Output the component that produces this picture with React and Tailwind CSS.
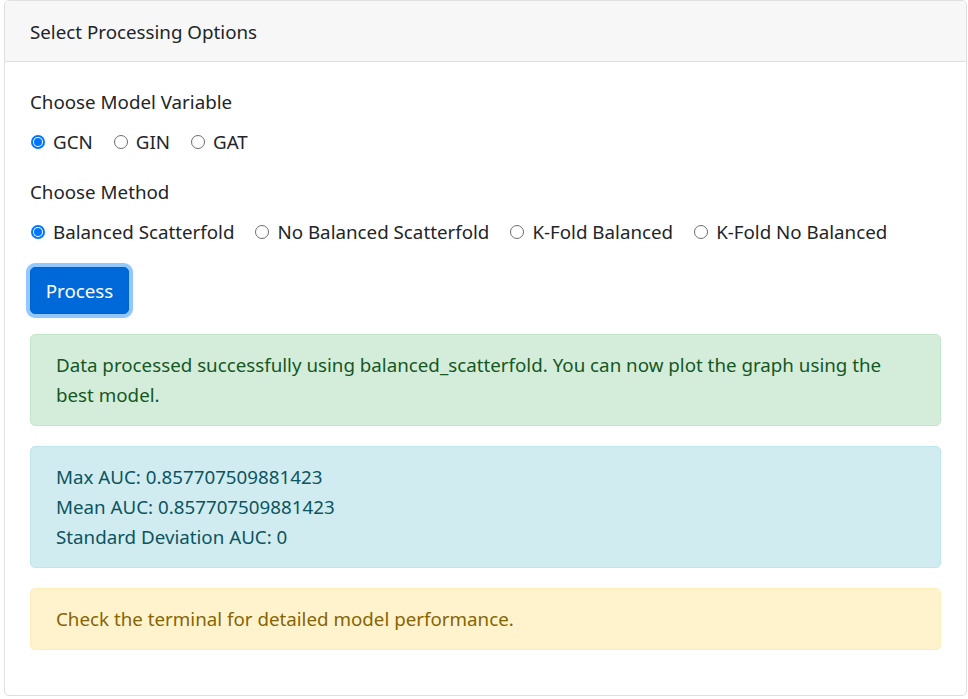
import React, { useState } from 'react';

const Radio = ({ checked, label, onChange, last }) => (
  <label className={`inline-flex items-center cursor-pointer ${last ? '' : 'mr-[20px]'}`} onClick={onChange}>
    {checked ? (
      <span className="ml-[1px] w-[14px] h-[14px] rounded-full bg-[#0075ff] flex items-center justify-center">
        <span className="w-[10px] h-[10px] rounded-full bg-white flex items-center justify-center">
          <span className="w-[8px] h-[8px] rounded-full bg-[#0075ff]" />
        </span>
      </span>
    ) : (
      <span className="ml-[1px] w-[14px] h-[14px] rounded-full border border-[#6d6d6d] bg-white" />
    )}
    <span className="ml-[8px]">{label}</span>
  </label>
);

const App = () => {
  const [model, setModel] = useState('GCN');
  const [method, setMethod] = useState('balanced_scatterfold');

  const models = ['GCN', 'GIN', 'GAT'];
  const methods = [
    { value: 'balanced_scatterfold', label: 'Balanced Scatterfold' },
    { value: 'no_balanced_scatterfold', label: 'No Balanced Scatterfold' },
    { value: 'kfold_balanced', label: 'K-Fold Balanced' },
    { value: 'kfold_no_balanced', label: 'K-Fold No Balanced' },
  ];

  const successMsg = `Data processed successfully using ${method}. You can now plot the graph using the best model.`;

  return (
    <div className="bg-white min-h-[699px] pl-[4px] pt-0 text-[#212529] text-[18.75px] leading-[30px] font-['Noto_Sans',sans-serif]">
      <div className="w-[963px] border border-[#dfdfdf] rounded-[5px] bg-white">
        <div className="bg-[#f7f7f7] border-b border-[#dfdfdf] px-[25px] pt-[16px] pb-[14px] rounded-t-[5px]">
          Select Processing Options
        </div>
        <div className="p-[25px]">
          <div className="mb-[20px]">
            <div className="mb-[10px]">Choose Model Variable</div>
            <div className="flex items-center">
              {models.map((m, i) => (
                <Radio key={m} label={m} checked={model === m} onChange={() => setModel(m)} last={i === models.length - 1} />
              ))}
            </div>
          </div>
          <div className="mb-[20px]">
            <div className="mb-[10px]">Choose Method</div>
            <div className="flex items-center">
              {methods.map((m, i) => (
                <Radio key={m.value} label={m.label} checked={method === m.value} onChange={() => setMethod(m.value)} last={i === methods.length - 1} />
              ))}
            </div>
          </div>
          <button className="h-[47px] w-[99px] bg-[#0069d9] text-white rounded-[5px] border border-[#0062cc] shadow-[0_0_0_4px_rgba(38,143,255,0.5)]">
            Process
          </button>
          <div className="mt-[20px] bg-[#d4edda] border border-[#c3e6cb] text-[#155724] rounded-[5px] px-[25px] py-[15px]">
            {successMsg}
          </div>
          <div className="mt-[20px] bg-[#d1ecf1] border border-[#bee5eb] text-[#0c5460] rounded-[5px] px-[25px] py-[15px]">
            <div>Max AUC: 0.857707509881423</div>
            <div>Mean AUC: 0.857707509881423</div>
            <div>Standard Deviation AUC: 0</div>
          </div>
          <div className="mt-[20px] mb-[20px] bg-[#fff3cd] border border-[#ffeeba] text-[#856404] rounded-[5px] px-[25px] py-[15px]">
            Check the terminal for detailed model performance.
          </div>
        </div>
      </div>
    </div>
  );
};

export default App;
